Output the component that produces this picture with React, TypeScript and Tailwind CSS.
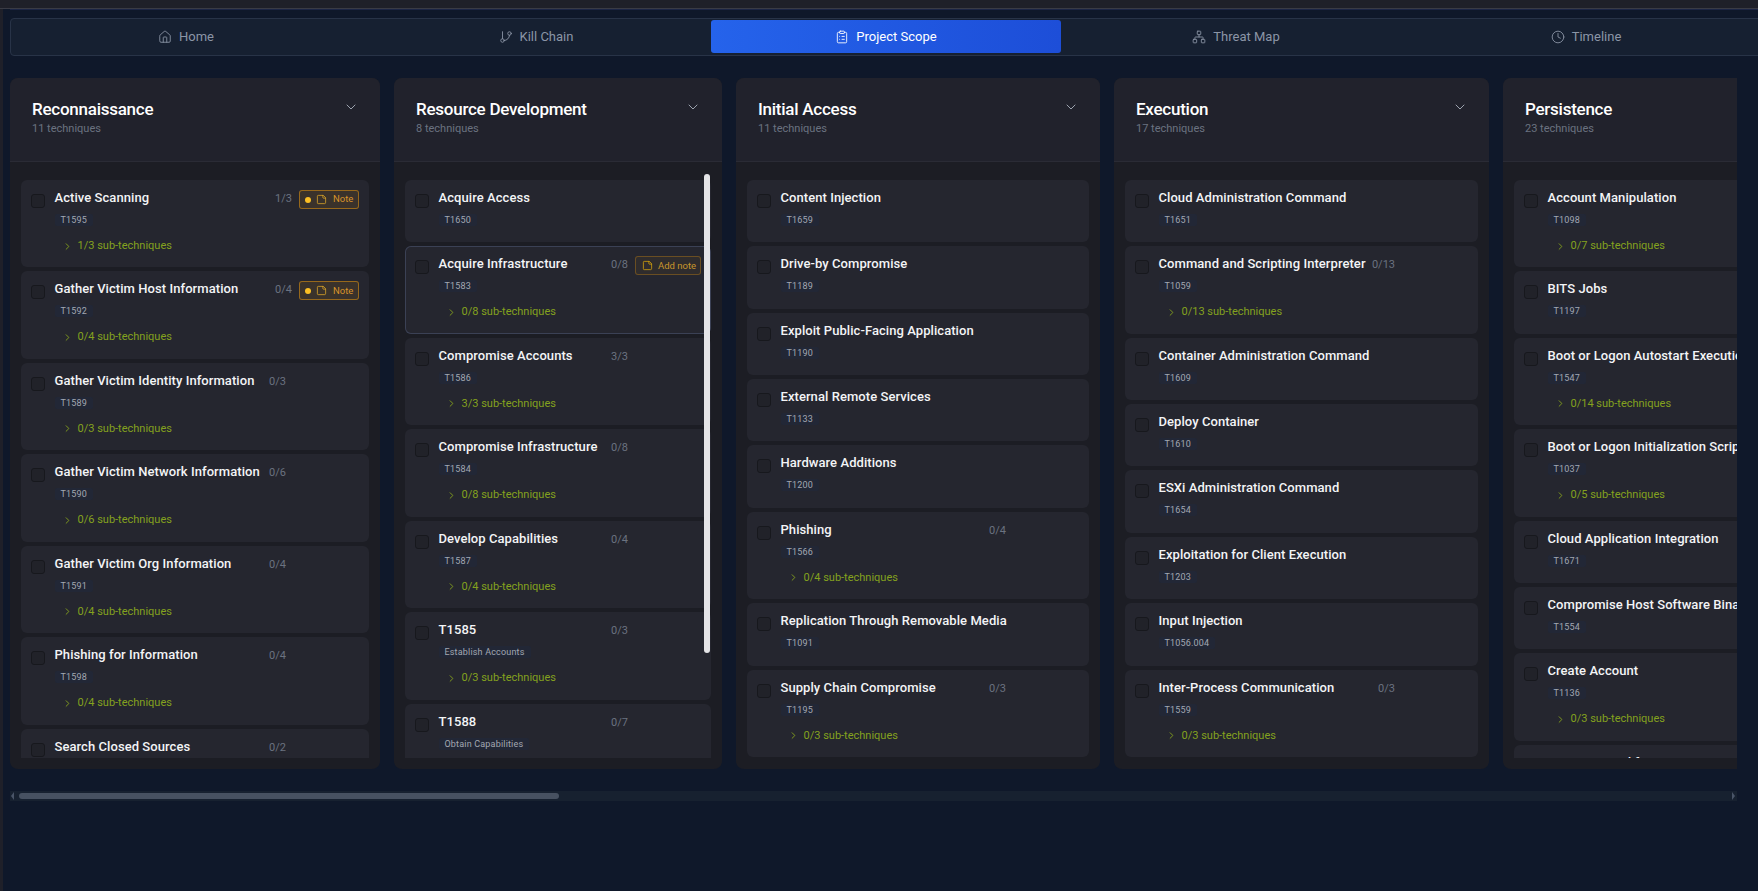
import { ChevronDown, ChevronRight, ClipboardList, Clock, GitBranch, House, Network, StickyNote } from "lucide-react";

type Technique = {
  title: string;
  id: string;
  count?: string;
  note?: "note" | "add";
  hovered?: boolean;
};

type Tactic = {
  name: string;
  total: string;
  width: string;
  scrollbar?: boolean;
  items: Technique[];
};

const tabs = [
  { label: "Home", icon: House },
  { label: "Kill Chain", icon: GitBranch },
  { label: "Project Scope", icon: ClipboardList, active: true },
  { label: "Threat Map", icon: Network },
  { label: "Timeline", icon: Clock },
];

const tactics: Tactic[] = [
  {
    name: "Reconnaissance",
    total: "11 techniques",
    width: "w-[370px]",
    items: [
      { title: "Active Scanning", id: "T1595", count: "1/3", note: "note" },
      { title: "Gather Victim Host Information", id: "T1592", count: "0/4", note: "note" },
      { title: "Gather Victim Identity Information", id: "T1589", count: "0/3" },
      { title: "Gather Victim Network Information", id: "T1590", count: "0/6" },
      { title: "Gather Victim Org Information", id: "T1591", count: "0/4" },
      { title: "Phishing for Information", id: "T1598", count: "0/4" },
      { title: "Search Closed Sources", id: "T1597", count: "0/2" },
    ],
  },
  {
    name: "Resource Development",
    total: "8 techniques",
    width: "w-[328px]",
    scrollbar: true,
    items: [
      { title: "Acquire Access", id: "T1650" },
      { title: "Acquire Infrastructure", id: "T1583", count: "0/8", note: "add", hovered: true },
      { title: "Compromise Accounts", id: "T1586", count: "3/3" },
      { title: "Compromise Infrastructure", id: "T1584", count: "0/8" },
      { title: "Develop Capabilities", id: "T1587", count: "0/4" },
      { title: "T1585", id: "Establish Accounts", count: "0/3" },
      { title: "T1588", id: "Obtain Capabilities", count: "0/7" },
    ],
  },
  {
    name: "Initial Access",
    total: "11 techniques",
    width: "w-[364px]",
    items: [
      { title: "Content Injection", id: "T1659" },
      { title: "Drive-by Compromise", id: "T1189" },
      { title: "Exploit Public-Facing Application", id: "T1190" },
      { title: "External Remote Services", id: "T1133" },
      { title: "Hardware Additions", id: "T1200" },
      { title: "Phishing", id: "T1566", count: "0/4" },
      { title: "Replication Through Removable Media", id: "T1091" },
      { title: "Supply Chain Compromise", id: "T1195", count: "0/3" },
    ],
  },
  {
    name: "Execution",
    total: "17 techniques",
    width: "w-[375px]",
    items: [
      { title: "Cloud Administration Command", id: "T1651" },
      { title: "Command and Scripting Interpreter", id: "T1059", count: "0/13" },
      { title: "Container Administration Command", id: "T1609" },
      { title: "Deploy Container", id: "T1610" },
      { title: "ESXi Administration Command", id: "T1654" },
      { title: "Exploitation for Client Execution", id: "T1203" },
      { title: "Input Injection", id: "T1056.004" },
      { title: "Inter-Process Communication", id: "T1559", count: "0/3" },
    ],
  },
  {
    name: "Persistence",
    total: "23 techniques",
    width: "w-[520px]",
    items: [
      { title: "Account Manipulation", id: "T1098", count: "0/7" },
      { title: "BITS Jobs", id: "T1197" },
      { title: "Boot or Logon Autostart Execution", id: "T1547", count: "0/14" },
      { title: "Boot or Logon Initialization Scripts", id: "T1037", count: "0/5" },
      { title: "Cloud Application Integration", id: "T1671" },
      { title: "Compromise Host Software Binary", id: "T1554" },
      { title: "Create Account", id: "T1136", count: "0/3" },
      { title: "Create or Modify System Process", id: "T1543", count: "0/5" },
    ],
  },
];

function NoteButton({ kind }: { kind?: "note" | "add" }) {
  if (!kind) return <div className="w-[66px] shrink-0" />;
  if (kind === "note") {
    return (
      <button className="mt-[2px] flex h-[19px] w-[60px] shrink-0 items-center rounded-[3px] border border-[#f59e0b]/50 bg-[#f59e0b]/10 pl-[5px] text-[9.5px] text-[#d9932a]">
        <span className="h-[6px] w-[6px] rounded-full bg-[#fbbf24]" />
        <StickyNote size={11} strokeWidth={1.5} className="ml-[5px] text-[#f0b429]" />
        <span className="ml-[6px]">Note</span>
      </button>
    );
  }
  return (
    <button className="mt-[2px] flex h-[19px] w-[66px] shrink-0 items-center rounded-[3px] border border-[#f59e0b]/30 bg-[#f59e0b]/5 pl-[6px] text-[9.5px] text-[#c8962c]">
      <StickyNote size={11} strokeWidth={1.5} className="text-[#eab308]" />
      <span className="ml-[5px]">Add note</span>
    </button>
  );
}

function TechniqueCard({ item }: { item: Technique }) {
  return (
    <div
      className={`flex shrink-0 rounded-md bg-[#25262f] pl-[10px] pr-[10px] pt-[8px] ${item.count ? "pb-[13.45px]" : "pb-[16.35px]"} ${item.hovered ? "ring-1 ring-inset ring-[#3b4155]" : ""}`}
    >
      <div className="mt-[6px] h-[14px] w-[14px] shrink-0 rounded-[3px] border border-[#17181d] bg-[#212229]" />
      <div className="ml-[9.5px] min-w-0 flex-1">
        <div className="flex h-[22px] items-start">
          <div className="min-w-0 flex-1 whitespace-nowrap text-[13px] font-medium leading-5 tracking-[0.005em] text-[#f3f4f6]">{item.title}</div>
          {item.count && <div className="ml-2 mr-[7px] mt-[3px] shrink-0 text-[11px] leading-4 text-[#6b7280]">{item.count}</div>}
          <NoteButton kind={item.note} />
        </div>
        <div className="mt-[4px] flex">
          <span className="h-[12px] rounded-[2px] bg-[#222736] px-[6px] text-[9px] leading-[12px] tracking-[0.02em] text-[#a3a8b2]">{item.id}</span>
        </div>
        {item.count && (
          <div className="ml-[7px] mt-[12px] flex h-4 items-center text-[11px] leading-4 text-[#84a11e]">
            <ChevronRight size={11} strokeWidth={2} />
            <span className="ml-[5px]">{item.count} sub-techniques</span>
          </div>
        )}
      </div>
    </div>
  );
}

function TacticColumn({ tactic }: { tactic: Tactic }) {
  return (
    <div className={`relative flex h-[691px] shrink-0 flex-col overflow-hidden rounded-lg bg-[#1c1d24] ${tactic.width}`}>
      <div className="flex h-[84px] shrink-0 items-start justify-between border-b border-[#2a2b35] bg-[#21222c] pl-[22px] pr-[21px] pt-[19px]">
        <div>
          <div className="text-[17px] font-medium leading-6 tracking-[-0.015em] text-white">{tactic.name}</div>
          <div className="text-[11px] leading-4 text-[#6b7280]">{tactic.total}</div>
        </div>
        <ChevronDown size={16} strokeWidth={1.5} className="mt-[2px] text-[#9ca3af]" />
      </div>
      <div className="mx-[11px] mt-[18px] flex h-[578px] flex-col gap-1 overflow-hidden">
        {tactic.items.map((item) => (
          <TechniqueCard key={item.title} item={item} />
        ))}
      </div>
      {tactic.scrollbar && <div className="absolute right-[12px] top-[96px] h-[479px] w-[6px] rounded-full bg-[#e4e4e7]" />}
    </div>
  );
}

export default function App() {
  return (
    <div className="h-[891px] w-full overflow-hidden bg-[#0f182a] font-['Roboto',sans-serif]">
      <div className="h-[8px] bg-[#1f2029]" />
      <div className="h-[1px] bg-[#3a3b45]" />
      <div className="flex h-[882px]">
        <div className="w-[3px] shrink-0 bg-[#1f2029]" />
        <div className="min-w-0 flex-1 overflow-hidden pl-[7px]">
          <div className="h-[1px] bg-[#1c2545]" />
          <nav className="mt-[8px] flex h-[38px] w-[1752px] items-start rounded-[4px] border border-[#283347] bg-[#162031] pt-[1px]">
            {tabs.map((tab) => (
              <div
                key={tab.label}
                className={`flex h-[33px] w-[350px] shrink-0 items-center justify-center gap-[7px] rounded-[3px] text-[13px] ${tab.active ? "bg-gradient-to-r from-[#2563eb] to-[#1d4ed8] text-white" : "text-[#8b95a6]"}`}
              >
                <tab.icon size={14} strokeWidth={1.5} />
                <span>{tab.label}</span>
              </div>
            ))}
          </nav>
          <div className="mt-[22px] flex w-[1727px] gap-[14px] overflow-hidden">
            {tactics.map((tactic) => (
              <TacticColumn key={tactic.name} tactic={tactic} />
            ))}
          </div>
          <div className="mt-[22px] flex h-[10px] w-[1727px] items-center bg-[#172130] pl-[1px] pr-[2px]">
            <div className="h-0 w-0 border-y-[4px] border-r-[3px] border-y-transparent border-r-[#4a5568]" />
            <div className="ml-[5px] h-[6px] w-[540px] rounded-full bg-[#475161]" />
            <div className="ml-auto h-0 w-0 border-y-[4px] border-l-[3px] border-y-transparent border-l-[#4a5568]" />
          </div>
        </div>
      </div>
    </div>
  );
}
